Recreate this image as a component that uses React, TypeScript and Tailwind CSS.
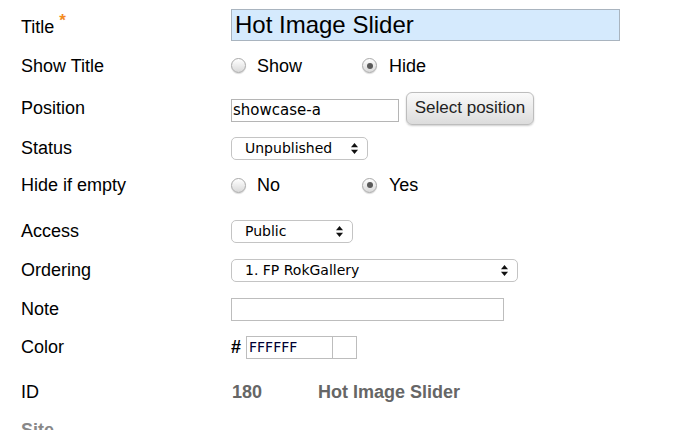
import { ReactNode } from "react";

function Radio({ checked = false }: { checked?: boolean }) {
  return (
    <span className="flex h-[15px] w-[15px] items-center justify-center rounded-full border border-[#a9a9a9] bg-gradient-to-b from-[#ffffff] to-[#d9d9d9] shadow-[0_1px_1px_rgba(0,0,0,0.15)]">
      {checked && <span className="h-[6px] w-[6px] rounded-full bg-[#5a5a5a]" />}
    </span>
  );
}

function SelectArrows() {
  return (
    <svg width="7" height="11" viewBox="0 0 7 11" className="shrink-0">
      <path d="M3.5 0 L7 4.2 L0 4.2 Z" fill="#111" />
      <path d="M3.5 11 L7 6.8 L0 6.8 Z" fill="#111" />
    </svg>
  );
}

function FakeSelect({ value, width }: { value: string; width: string }) {
  return (
    <div
      className={`flex h-[23px] ${width} items-center justify-between rounded-[5px] border border-[#c4c4c4] bg-white pl-[13px] pr-[9px] font-['DejaVu_Sans',sans-serif] text-[14px] text-black`}
    >
      <span>{value}</span>
      <SelectArrows />
    </div>
  );
}

function Row({ label, height, children, labelClass = "" }: { label: ReactNode; height: string; children?: ReactNode; labelClass?: string }) {
  return (
    <div className={`flex ${height} items-center`}>
      <div className={`w-[231px] shrink-0 pl-[21px] ${labelClass}`}>{label}</div>
      <div className="flex items-center">{children}</div>
    </div>
  );
}

export default function App() {
  return (
    <div className="h-[430px] w-[679px] overflow-hidden bg-white font-['Liberation_Sans',Arial,sans-serif] text-[18px] leading-[18px] text-black">
      <Row
        height="h-[50px]"
        labelClass="pt-1"
        label={
          <span>
            Title <span className="relative -top-[7px] text-[17px] font-bold text-[#f38b1f]">*</span>
          </span>
        }
      >
        <div className="flex h-[32px] w-[389px] items-center border border-[#a9b4bf] bg-[#d5eafd] pl-[3px] text-[24px] leading-[24px]">
          Hot Image Slider
        </div>
      </Row>

      <Row height="h-[31px]" label="Show Title">
        <Radio />
        <span className="ml-[11px] w-[105px]">Show</span>
        <Radio checked />
        <span className="ml-[12px]">Hide</span>
      </Row>

      <Row height="h-[54px]" label="Position">
        <div className="mt-1 flex h-[23px] w-[168px] items-center border border-[#b5b5b5] bg-white pl-[1px] font-['DejaVu_Sans',sans-serif] text-[15px]">
          showcase-a
        </div>
        <button className="ml-[7px] h-[33px] w-[128px] rounded-[6px] border border-[#bdbdbd] bg-gradient-to-b from-[#fafafa] to-[#dcdcdc] text-[17px] text-[#222] shadow-[0_1px_2px_rgba(0,0,0,0.2)]">
          Select position
        </button>
      </Row>

      <Row height="h-[26px]" label="Status">
        <FakeSelect value="Unpublished" width="w-[137px]" />
      </Row>

      <Row height="h-[48px]" label="Hide if empty">
        <Radio />
        <span className="ml-[11px] w-[105px]">No</span>
        <Radio checked />
        <span className="ml-[12px]">Yes</span>
      </Row>

      <Row height="h-[44px]" label="Access">
        <FakeSelect value="Public" width="w-[122px]" />
      </Row>

      <Row height="h-[34px]" label="Ordering">
        <FakeSelect value="1. FP RokGallery" width="w-[287px]" />
      </Row>

      <Row height="h-[44px]" label="Note">
        <div className="h-[23px] w-[273px] border border-[#bdbdbd] bg-white" />
      </Row>

      <Row height="h-[32px]" label="Color">
        <span className="mr-[5px] font-bold">#</span>
        <div className="flex h-[23px] w-[87px] items-center border border-[#bdbdbd] bg-white pl-[2px] font-['DejaVu_Sans',sans-serif] text-[14px] text-[#000033]">
          FFFFFF
        </div>
        <div className="h-[23px] w-[24px] border border-l-0 border-[#bdbdbd] bg-white" />
      </Row>

      <Row height="h-[58px]" label="ID">
        <span className="ml-[1px] w-[86px] font-bold text-[#666]">180</span>
        <span className="font-bold text-[#666]">Hot Image Slider</span>
      </Row>

      <Row height="h-[18px]" label={<span className="font-bold text-[#888]">Site</span>} />
    </div>
  );
}
